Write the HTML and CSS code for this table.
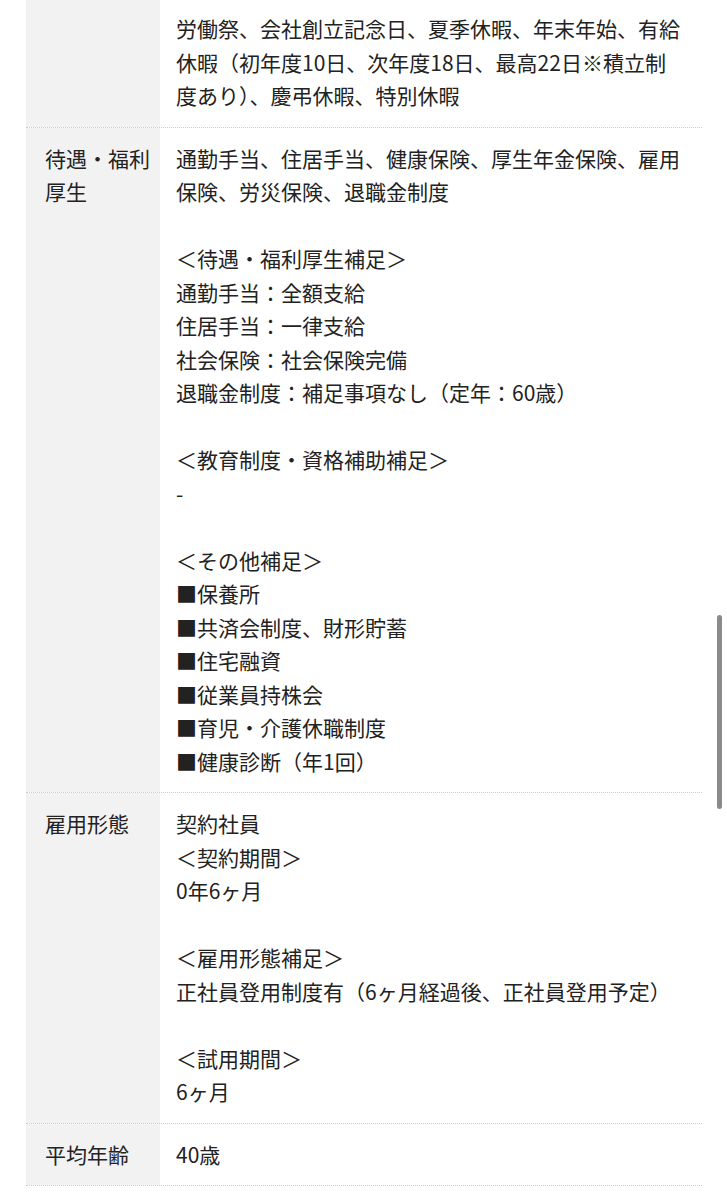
FILE: index.html
```html
<!DOCTYPE html>
<html lang="ja">
<head>
<meta charset="utf-8">
<title>募集要項</title>
<link rel="stylesheet" href="styles.css">
</head>
<body>
<div class="spec">
  <div class="row row--cut">
    <div class="label"></div>
    <div class="value">
      <p class="para">労働祭、会社創立記念日、夏季休暇、年末年始、有給休暇（初年度10日、次年度18日、最高22日※積立制度あり）、慶弔休暇、特別休暇</p>
    </div>
  </div>
  <div class="row">
    <div class="label">待遇・福利厚生</div>
    <div class="value">
      <p class="para">通勤手当、住居手当、健康保険、厚生年金保険、雇用保険、労災保険、退職金制度</p>
      <p class="para">＜待遇・福利厚生補足＞<br>通勤手当：全額支給<br>住居手当：一律支給<br>社会保険：社会保険完備<br>退職金制度：補足事項なし（定年：60歳）</p>
      <p class="para">＜教育制度・資格補助補足＞<br>-</p>
      <p class="para">＜その他補足＞<br>■保養所<br>■共済会制度、財形貯蓄<br>■住宅融資<br>■従業員持株会<br>■育児・介護休職制度<br>■健康診断（年1回）</p>
    </div>
  </div>
  <div class="row">
    <div class="label">雇用形態</div>
    <div class="value">
      <p class="para">契約社員<br>＜契約期間＞<br>0年6ヶ月</p>
      <p class="para">＜雇用形態補足＞<br>正社員登用制度有（6ヶ月経過後、正社員登用予定）</p>
      <p class="para">＜試用期間＞<br>6ヶ月</p>
    </div>
  </div>
  <div class="row">
    <div class="label">平均年齢</div>
    <div class="value">
      <p class="para">40歳</p>
    </div>
  </div>
</div>
<div class="scrollbar"></div>
</body>
</html>
```

FILE: styles.css
```css
html, body {
  margin: 0;
  padding: 0;
  background: #ffffff;
}

body {
  font-family: "Noto Sans CJK JP", "Noto Sans", sans-serif;
  font-size: 21px;
  line-height: 33.5px;
  color: #222222;
}

.spec {
  margin-left: 26px;
  width: 676px;
}

.row {
  display: grid;
  grid-template-columns: 134px 1fr;
  border-bottom: 1px dotted #c8cad8;
}

.label {
  background: #f2f2f2;
  padding: 14px 10px 14px 19px;
}

.value {
  padding: 14px 16px 14px 16px;
}

.row--cut .label,
.row--cut .value {
  padding-top: 12px;
}

.para {
  margin: 0 0 33.5px 0;
}

.para:last-child {
  margin-bottom: 0;
}

.scrollbar {
  position: fixed;
  left: 717px;
  top: 615px;
  width: 5px;
  height: 194px;
  background: #8a8a8a;
  border-radius: 3px;
}
```
